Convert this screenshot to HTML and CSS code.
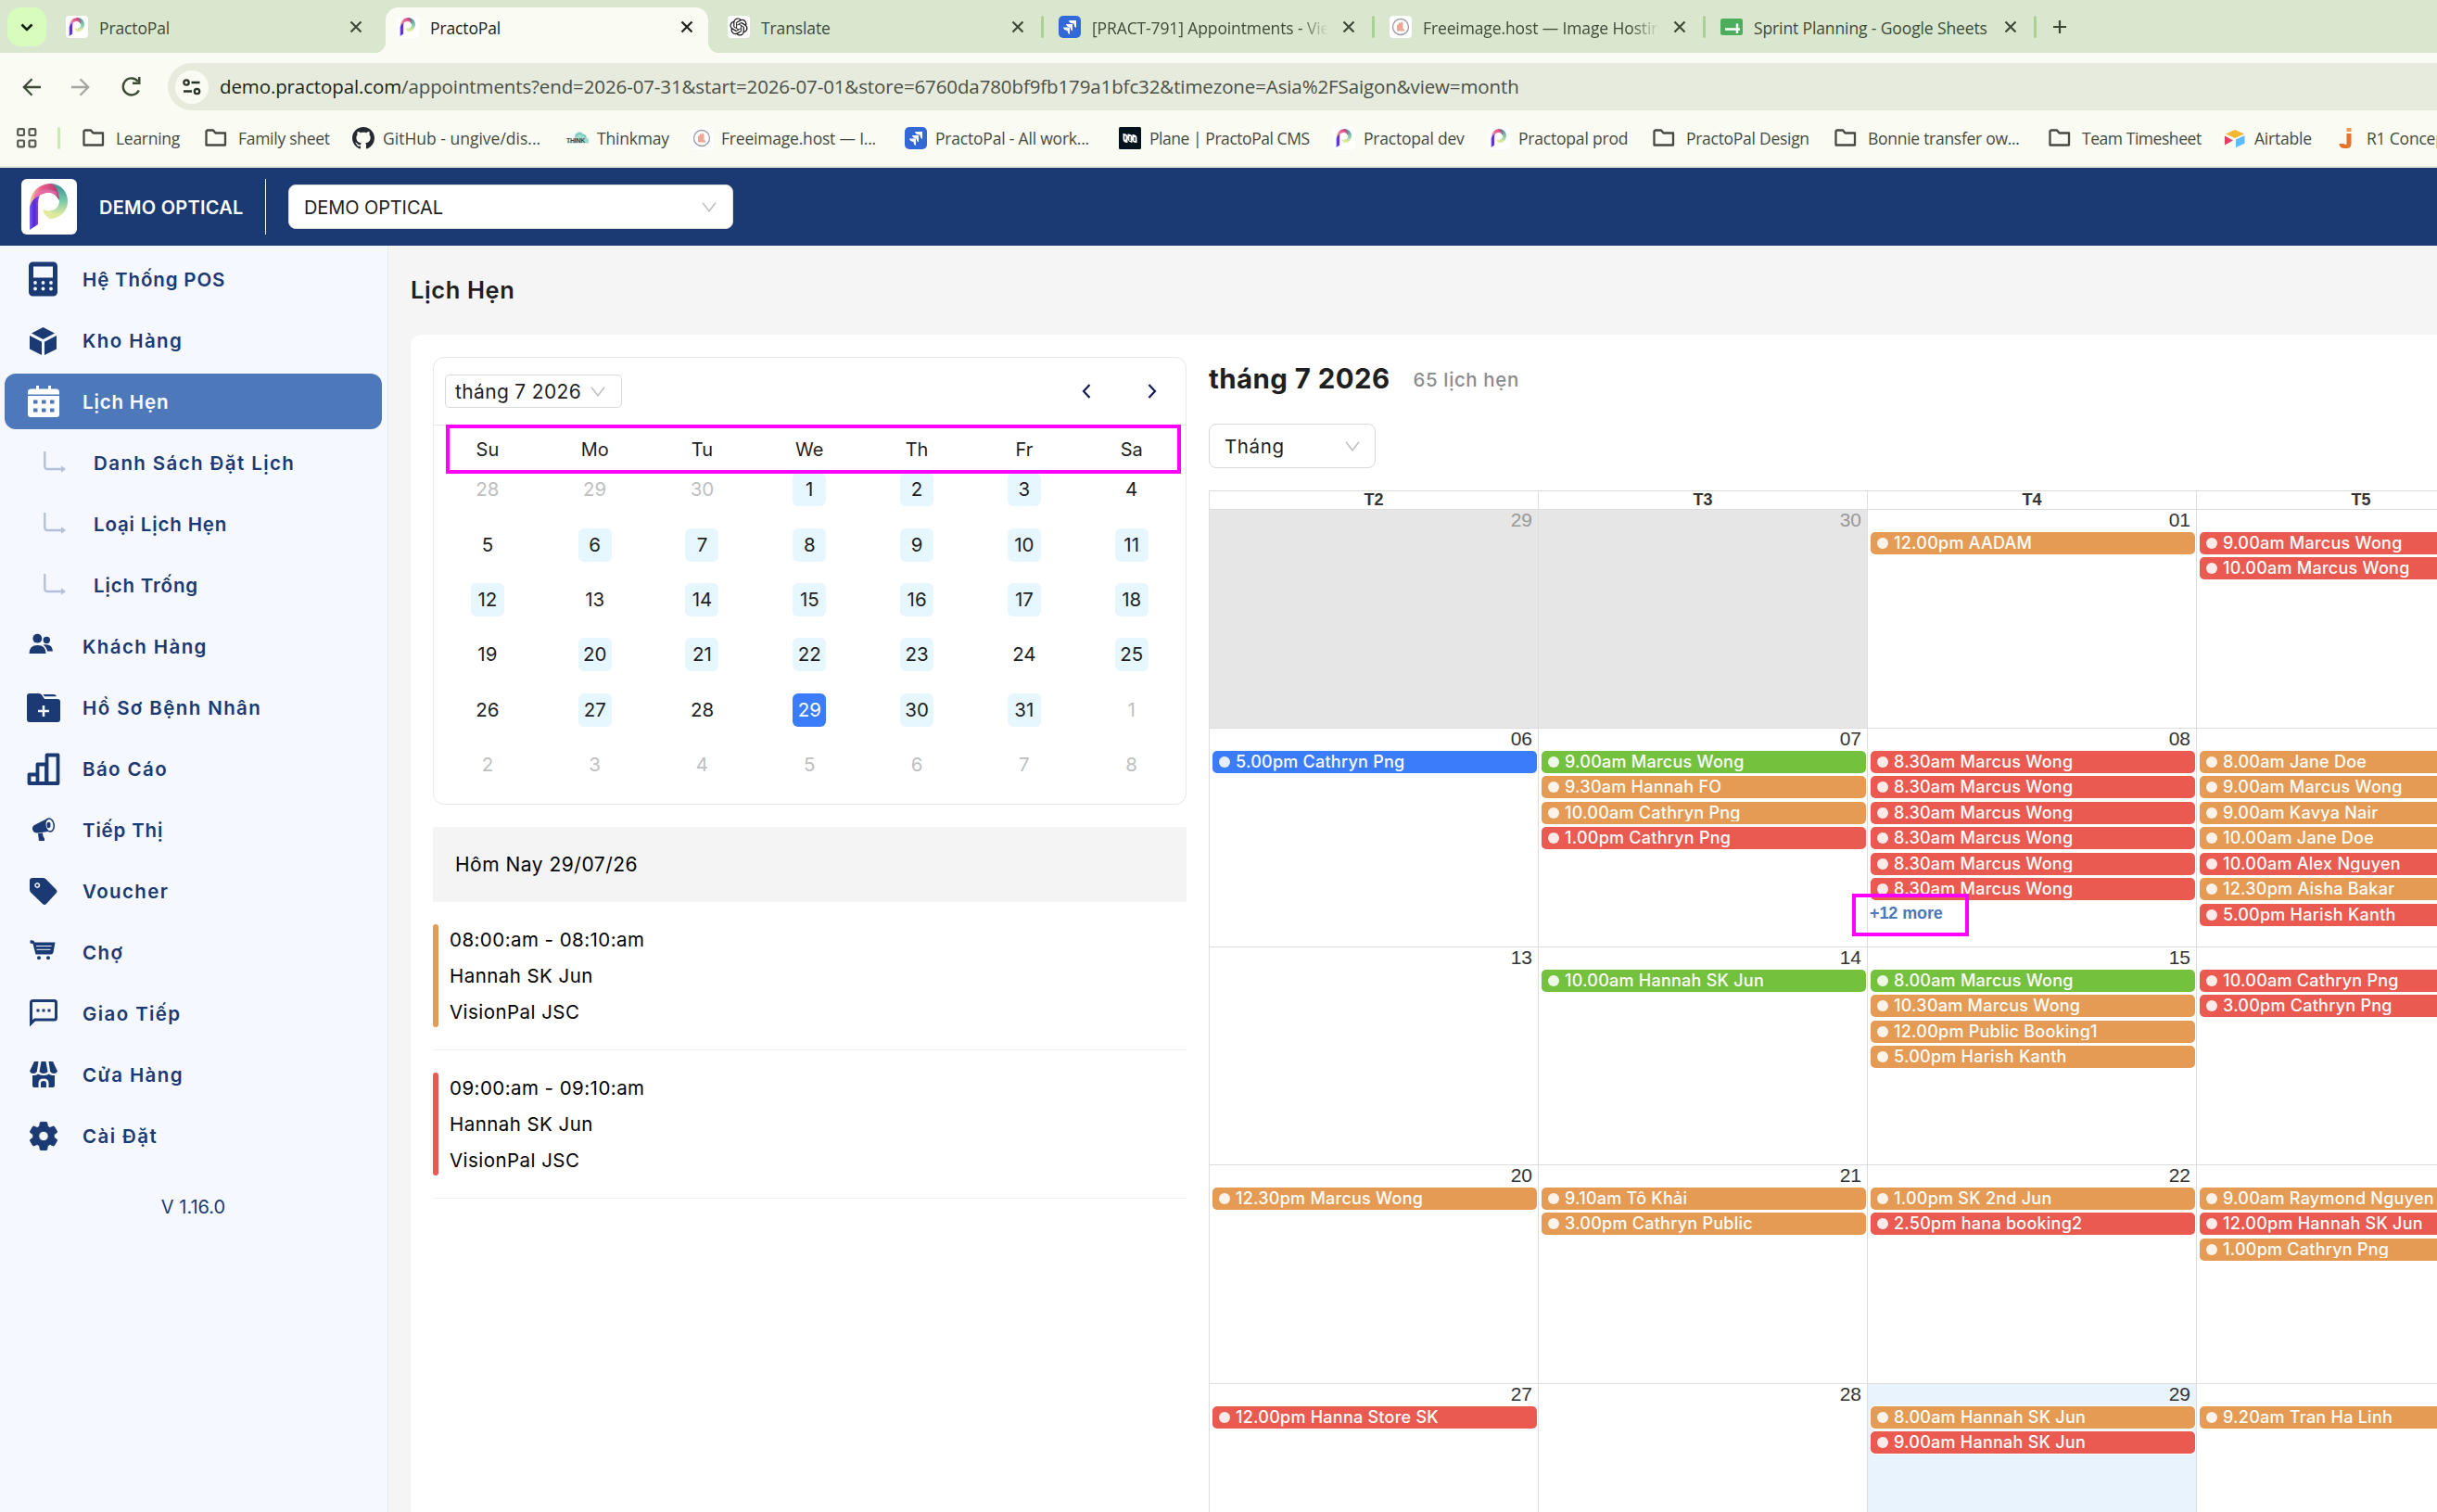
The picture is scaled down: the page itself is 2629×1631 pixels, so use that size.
FILE: index.html
```html
<!DOCTYPE html>
<html lang="vi">
<head>
<meta charset="utf-8">
<title>PractoPal</title>
<link rel="stylesheet" href="styles.css">
</head>
<body>
<svg class="defs" width="0" height="0">
  <defs>
    <linearGradient id="g-teal" x1="0" y1="0" x2="0" y2="1"><stop offset="0" stop-color="#3f9f98"/><stop offset=".5" stop-color="#7cc8ab"/><stop offset="1" stop-color="#dfe9a0"/></linearGradient>
    <linearGradient id="g-pink" x1="0" y1="0" x2="1" y2="0"><stop offset="0" stop-color="#f7c795"/><stop offset=".4" stop-color="#ea5c8c"/><stop offset="1" stop-color="#b03a70"/></linearGradient>
    <linearGradient id="g-stem" x1="0" y1="0" x2="1" y2="0"><stop offset="0" stop-color="#7a5cf8"/><stop offset=".45" stop-color="#5228d0"/><stop offset="1" stop-color="#a54df2"/></linearGradient>
  </defs>
  <symbol id="logo" viewBox="0 0 60 60">
    <path d="M32 9.5a14 14.500 0 1 1-1 29" fill="none" stroke="url(#g-teal)" stroke-width="9"/>
    <path d="M23 33l9.500 2v8.500q-7-2-9.500-10.500z" fill="#e3ea9e"/>
    <path d="M36 14.500a10.500 10.500 0 0 1 5 8" fill="none" stroke="#6cc3a8" stroke-width="2"/>
    <path d="M9 31Q9 8 30 5q9-1 11 18-6-10-14-8Q14 17 9 31z" fill="url(#g-pink)"/>
    <path d="M14 18Q24 7 38 14l1 5q-6-5-12-4-7 1-13 8z" fill="#e66fb0" opacity=".75"/>
    <path d="M9 55V30q2-8 11-12.500Q18 22 18 27v22z" fill="url(#g-stem)"/>
  </symbol>
  <symbol id="close" viewBox="0 0 14 14"><path d="M1.500 1.500l11 11M12.500 1.500l-11 11" stroke="currentColor" stroke-width="2.200" fill="none"/></symbol>
  <symbol id="folder" viewBox="0 0 24 24"><path d="M2.500 3.500h6.500l2.500 3h10.500v13H1.500V4.500z" fill="none" stroke="currentColor" stroke-width="2.300" stroke-linejoin="round"/></symbol>
  <symbol id="jira" viewBox="0 0 24 24"><rect width="24" height="24" rx="5" fill="#3269d6"/><path d="M11 5h8v8q-2.500-1-2.500-4.500Q11.500 8.500 11 5zM8 9h7v7.500q-2.500-1-2.500-4Q8.500 12 8 9zM5 12.500h7V20q-2.500-1-2.500-4Q5.500 15.500 5 12.500z" fill="#fff"/></symbol>
  <symbol id="freeimg" viewBox="0 0 24 24"><rect width="24" height="24" rx="4" fill="#fff"/><circle cx="12" cy="12" r="8.500" fill="none" stroke="#9b9ba2" stroke-width="1.300"/><path d="M8 16.500V10l2-1V7l2 1 1-2 1.500 2v6l1.500.5v2z" fill="#eda799"/></symbol>
  <symbol id="chev" viewBox="0 0 16 11"><path d="M1 .8l7 9 7-9" fill="none" stroke="#bfbfbf" stroke-width="1.500"/></symbol>
  <symbol id="sub" viewBox="0 0 40 40"><path d="M9.300 8v16q0 3 3 3H29" fill="none" stroke="#b4bfda" stroke-width="2.300"/><path d="M27 23.200l5 3.800-5 3.800z" fill="#b4bfda"/></symbol>
</svg>

<header class="chrome">
  <div class="tabs">
    <button class="tabs-menu"><svg width="14" height="9" viewBox="0 0 14 9"><path d="M1.500 1.500L7 7l5.500-5.500" fill="none" stroke="#10200a" stroke-width="2.600"/></svg></button>
    <div class="tab"><svg class="fav fav-white"><use href="#logo"/></svg><span class="tab-label">PractoPal</span><svg class="x"><use href="#close"/></svg></div>
    <div class="tab tab-active"><svg class="fav fav-white"><use href="#logo"/></svg><span class="tab-label">PractoPal</span><svg class="x"><use href="#close"/></svg></div>
    <div class="tab tab-sep"><svg class="fav fav-white" viewBox="-3 -3 30 30"><path fill="#222" d="M22.2819 9.8211a5.9847 5.9847 0 0 0-.5157-4.9108 6.0462 6.0462 0 0 0-6.5098-2.9A6.0651 6.0651 0 0 0 4.9807 4.1818a5.9847 5.9847 0 0 0-3.9977 2.9 6.0462 6.0462 0 0 0 .7427 7.0966 5.98 5.98 0 0 0 .511 4.9107 6.051 6.051 0 0 0 6.5146 2.9001A5.9847 5.9847 0 0 0 13.2599 24a6.0557 6.0557 0 0 0 5.7718-4.2058 5.9894 5.9894 0 0 0 3.9977-2.9001 6.0557 6.0557 0 0 0-.7475-7.0729zm-9.022 12.6081a4.4755 4.4755 0 0 1-2.8764-1.0408l.1419-.0804 4.7783-2.7582a.7948.7948 0 0 0 .3927-.6813v-6.7369l2.02 1.1686a.071.071 0 0 1 .038.052v5.5826a4.504 4.504 0 0 1-4.4945 4.4944zm-9.6607-4.1254a4.4708 4.4708 0 0 1-.5346-3.0137l.142.0852 4.783 2.7582a.7712.7712 0 0 0 .7806 0l5.8428-3.3685v2.3324a.0804.0804 0 0 1-.0332.0615L9.74 19.9502a4.4992 4.4992 0 0 1-6.1408-1.6464zM2.3408 7.8956a4.485 4.485 0 0 1 2.3655-1.9728V11.6a.7664.7664 0 0 0 .3879.6765l5.8144 3.3543-2.0201 1.1685a.0757.0757 0 0 1-.071 0l-4.8303-2.7865A4.504 4.504 0 0 1 2.3408 7.872zm16.5963 3.8558L13.1038 8.364 15.1192 7.2a.0757.0757 0 0 1 .071 0l4.8303 2.7913a4.4944 4.4944 0 0 1-.6765 8.1042v-5.6772a.79.79 0 0 0-.407-.667zm2.0107-3.0231l-.142-.0852-4.7735-2.7818a.7759.7759 0 0 0-.7854 0L9.409 9.2297V6.8974a.0662.0662 0 0 1 .0284-.0615l4.8303-2.7866a4.4992 4.4992 0 0 1 6.6802 4.66zM8.3065 12.863l-2.02-1.1638a.0804.0804 0 0 1-.038-.0567V6.0742a4.4992 4.4992 0 0 1 7.3757-3.4537l-.142.0805L8.704 5.459a.7948.7948 0 0 0-.3927.6813zm1.0976-2.3654l2.602-1.4998 2.6069 1.4998v2.9994l-2.5974 1.4997-2.6067-1.4997Z"/></svg><span class="tab-label">Translate</span><svg class="x"><use href="#close"/></svg></div>
    <div class="tab tab-sep"><svg class="fav"><use href="#jira"/></svg><span class="tab-label fade">[PRACT-791] Appointments - View</span><svg class="x"><use href="#close"/></svg></div>
    <div class="tab tab-sep"><svg class="fav"><use href="#freeimg"/></svg><span class="tab-label fade">Freeimage.host — Image Hosting</span><svg class="x"><use href="#close"/></svg></div>
    <div class="tab tab-sep"><svg class="fav" viewBox="0 0 24 24"><rect y="3" width="24" height="18" rx="2.500" fill="#4cae5c"/><path d="M5 14.500h16M18 8.500V19" stroke="#fff" stroke-width="2.400"/></svg><span class="tab-label">Sprint Planning - Google Sheets</span><svg class="x"><use href="#close"/></svg></div>
    <svg class="plus" viewBox="0 0 14 14"><path d="M7 0v14M0 7h14" stroke="#3b4634" stroke-width="2.200"/></svg>
  </div>

  <div class="toolbar">
    <svg width="20" height="20" viewBox="0 0 20 20"><path d="M20 10H2M10.500 1.200L1.800 10l8.700 8.800" fill="none" stroke="#3c4a36" stroke-width="2.300"/></svg>
    <svg width="20" height="20" viewBox="0 0 20 20"><path d="M0 10h18M9.500 1.200L18.200 10l-8.700 8.800" fill="none" stroke="#a3a79f" stroke-width="2.300"/></svg>
    <svg width="21" height="21" viewBox="0 0 21 21"><path d="M18.800 14.500A9 9 0 1 1 17.800 4.800" fill="none" stroke="#3c4a36" stroke-width="2.400"/><path d="M20.500 0v8h-8.500V5.500h6V0z" fill="#3c4a36"/></svg>
    <div class="omnibox">
      <span class="site"><svg width="20" height="18" viewBox="0 0 20 18"><g fill="none" stroke="#2b3326" stroke-width="2.300"><circle cx="4" cy="4" r="2.700"/><circle cx="15.500" cy="13.500" r="2.700"/><path d="M9.500 4h9M1 13.500h9"/></g></svg></span>
      <span class="url"><b>demo.practopal.com</b>/appointments?end=2026-07-31&amp;start=2026-07-01&amp;store=6760da780bf9fb179a1bfc32&amp;timezone=Asia%2FSaigon&amp;view=month</span>
    </div>
  </div>

  <div class="bookmarks">
    <svg class="apps" width="22" height="22" viewBox="0 0 22 22"><g fill="none" stroke="#555b50" stroke-width="2.200"><rect x="1.200" y="1.200" width="6.800" height="6.800" rx="1"/><rect x="13.500" y="1.200" width="6.800" height="6.800" rx="1"/><rect x="1.200" y="13.500" width="6.800" height="6.800" rx="1"/><rect x="13.500" y="13.500" width="6.800" height="6.800" rx="1"/></g></svg>
    <i class="bm-sep"></i>
    <a class="bm bm-f"><svg class="fav"><use href="#folder"/></svg>Learning</a>
    <a class="bm bm-f"><svg class="fav"><use href="#folder"/></svg>Family sheet</a>
    <a class="bm bm-wide"><svg class="fav" viewBox="0 0 16 16"><path fill="#24292f" d="M8 0C3.580 0 0 3.580 0 8c0 3.540 2.290 6.530 5.470 7.590.4.070.55-.17.55-.38 0-.19-.01-.82-.01-1.490-2.010.37-2.530-.49-2.690-.94-.09-.23-.48-.94-.82-1.130-.28-.15-.68-.52-.01-.53.63-.01 1.080.58 1.230.82.72 1.210 1.870.87 2.330.66.07-.52.28-.87.51-1.070-1.780-.2-3.640-.89-3.640-3.950 0-.87.31-1.590.82-2.150-.08-.2-.36-1.020.08-2.120 0 0 .67-.21 2.200.82.64-.18 1.320-.27 2-.27s1.360.09 2 .27c1.530-1.040 2.200-.82 2.200-.82.44 1.100.16 1.920.08 2.120.51.56.82 1.270.82 2.150 0 3.070-1.870 3.750-3.650 3.950.29.25.54.73.54 1.480 0 1.070-.01 1.930-.01 2.200 0 .21.15.46.55.38A8.010 8.010 0 0 0 16 8c0-4.420-3.580-8-8-8z"/></svg>GitHub - ungive/dis...</a>
    <a class="bm"><svg class="fav" viewBox="0 0 24 24"><path d="M9 11a5 5 0 0 1 9-3.500q4 .5 4 5h2v5H1v-2h8z" fill="#9fdcd0"/><path d="M10.500 10.500a4 4 0 0 1 7-2q3.500.5 3.500 3" fill="none" stroke="#5cb8a8" stroke-width="1"/><text x="0" y="16.500" class="think">THINK</text></svg>Thinkmay</a>
    <a class="bm"><svg class="fav"><use href="#freeimg"/></svg>Freeimage.host — I...</a>
    <a class="bm"><svg class="fav"><use href="#jira"/></svg>PractoPal - All work...</a>
    <a class="bm bm-tight"><svg class="fav" viewBox="0 0 24 24"><rect width="24" height="24" rx="1.500" fill="#04121c"/><path d="M4.500 7q4 0 5 3v7q-5 0-5-4.500zM9.500 7.500q5 0 5 3.500v6q-5-1-5-5zM14.500 8q5 0 5 4v5q-5 0-5-3.500z" fill="#fff"/><path d="M7 9.500v4M12 10v5M17 11v4" stroke="#04121c" stroke-width="1.200"/></svg>Plane | PractoPal CMS</a>
    <a class="bm"><svg class="fav fav-white"><use href="#logo"/></svg>Practopal dev</a>
    <a class="bm"><svg class="fav fav-white"><use href="#logo"/></svg>Practopal prod</a>
    <a class="bm bm-f"><svg class="fav"><use href="#folder"/></svg>PractoPal Design</a>
    <a class="bm bm-f"><svg class="fav"><use href="#folder"/></svg>Bonnie transfer ow...</a>
    <a class="bm bm-f bm-tight"><svg class="fav"><use href="#folder"/></svg>Team Timesheet</a>
    <a class="bm"><svg class="fav" viewBox="0 0 24 24"><path d="M12 3l10 4.500-10 4.500L2 7.500z" fill="#f4b731"/><path d="M13 13.500l9.500-4.300v8.500L13 22z" fill="#5bbcf8"/><path d="M1 9.500l9 5-9 5z" fill="#e23f64"/></svg>Airtable</a>
    <a class="bm bm-j"><svg class="fav" viewBox="0 0 24 24"><path d="M8.500 1h5v4h-5z" fill="#f09a55"/><path d="M8.500 7h5v11q0 5-5 5h-2q-6 0-6-5h5q0 1 3 1z" fill="#e5742a"/></svg>R1 Concepts</a>
  </div>
</header>

<div class="topbar">
  <svg class="brand-logo"><use href="#logo"/></svg>
  <strong class="brand">DEMO OPTICAL</strong>
  <i class="brand-sep"></i>
  <div class="select store"><span>DEMO OPTICAL</span><svg class="chev"><use href="#chev"/></svg></div>
</div>

<div class="app">
  <nav class="side">
    <a class="nav"><svg class="ic" viewBox="0 0 40 40"><path fill-rule="evenodd" d="M8.500 1.500h22a4.500 4.500 0 0 1 4.500 4.500v28a4.500 4.500 0 0 1-4.500 4.500h-22A4.500 4.500 0 0 1 4 34V6a4.500 4.500 0 0 1 4.500-4.500zM9 6.500v12h21v-12z"/><g fill="#f5f8ff"><circle cx="11" cy="24" r="1.900"/><circle cx="19.500" cy="24" r="1.900"/><circle cx="28" cy="24" r="1.900"/><circle cx="11" cy="30.500" r="1.900"/><circle cx="19.500" cy="30.500" r="1.900"/><circle cx="28" cy="30.500" r="1.900"/></g></svg><span class="pos">Hệ Thống POS</span></a>
    <a class="nav"><svg class="ic" viewBox="0 0 40 40"><path d="M19.500 6l12.500 6.500-12.500 6.500L7 12.500zM5 15l13 6.700V36L5 29.500zM34 15l-13 6.700V36l13-6.500z"/></svg><span>Kho Hàng</span></a>
    <a class="nav nav-on"><svg class="ic" viewBox="0 0 40 40"><path d="M12 3h3v3.500h10V3h3v3.500h5.500Q37 6.500 37 10v2.500H3V10q0-3.500 3.500-3.500H12z"/><path fill-rule="evenodd" d="M3 14h34v20q0 3-3 3H6q-3 0-3-3zM9 18.500v4h4.500v-4zM18 18.500v4h4.500v-4zM27 18.500v4h4.500v-4zM9 27.500v4h4.500v-4zM18 27.500v4h4.500v-4zM27 27.500v4h4.500v-4z"/></svg><span class="pos">Lịch Hẹn</span></a>
    <a class="nav nav-sub"><svg class="ic"><use href="#sub"/></svg><span>Danh Sách Đặt Lịch</span></a>
    <a class="nav nav-sub"><svg class="ic"><use href="#sub"/></svg><span class="pos">Loại Lịch Hẹn</span></a>
    <a class="nav nav-sub"><svg class="ic"><use href="#sub"/></svg><span class="pos">Lịch Trống</span></a>
    <a class="nav"><svg class="ic" viewBox="0 0 40 40"><circle cx="13.300" cy="11.700" r="4.900"/><circle cx="23.300" cy="13.500" r="3.700"/><path d="M4.500 28q0-9 9-9t9 9zM19.500 18.500q10-1.500 10.500 7H24q-.5-4-4.500-7z"/></svg><span>Khách Hàng</span></a>
    <a class="nav"><svg class="ic" viewBox="0 0 40 40"><path fill-rule="evenodd" d="M5 5h10q2 0 3 1.500l3 4.500h14q3 0 3 3v19q0 3-3 3H5q-3 0-3-3V8q0-3 3-3zM18.700 18v4.700H14v2.600h4.700V30h2.600v-4.700H26v-2.600h-4.700V18z"/><path d="M19.500 6h11q3 0 3.500 2.300H21z"/></svg><span>Hồ Sơ Bệnh Nhân</span></a>
    <a class="nav"><svg class="ic" viewBox="0 0 40 40"><path d="M4.500 26.500h9V36h-9zM13.500 15.500h9.500V36h-9.500zM23.500 5.500h12V36h-12z" fill="none" stroke="currentColor" stroke-width="3.800" stroke-linejoin="round"/></svg><span>Báo Cáo</span></a>
    <a class="nav"><svg class="ic" viewBox="0 0 40 40"><ellipse cx="26.500" cy="15" rx="4.700" ry="7" transform="rotate(-10 26.500 15)" fill="none" stroke="currentColor" stroke-width="1.600"/><path d="M23 8.500Q20 15 25 22l-11 1.500q-5 .5-6-4-.5-3.500 3-5z"/><ellipse cx="25.500" cy="15" rx="2" ry="3.200"/><path d="M14 24l5-.5q0 4 2 6v2.500h-6z"/></svg><span class="pos">Tiếp Thị</span></a>
    <a class="nav"><svg class="ic" viewBox="0 0 40 40"><path fill-rule="evenodd" d="M8 6h11q2 0 3.500 1.300L33.500 18.500q2 2 0 4L23 34q-2 1.800-4 0L6.500 22Q5 20.500 5 18.500V9q0-3 3-3zm5.200 5a3 3 0 1 0 .1 0zm0 1.500a1.500 1.500 0 1 1-.1 0z"/></svg><span>Voucher</span></a>
    <a class="nav"><svg class="ic" viewBox="0 0 40 40"><path d="M5.500 7.500q4-1 5 2h22l-2 11q-.5 2-2.500 2H11.500L8.500 11l-3-.5z"/><path d="M12 13.500h16.500M12.500 17.300h15" stroke="#f5f8ff" stroke-width="1"/><circle cx="15" cy="26.300" r="2"/><circle cx="25" cy="26.300" r="2"/></svg><span>Chợ</span></a>
    <a class="nav"><svg class="ic" viewBox="0 0 40 40"><path d="M6.500 31V8.500q0-2 2-2h23q2 0 2 2v16.500q0 2-2 2h-21z" fill="none" stroke="currentColor" stroke-width="3"/><path d="M5 26v8l6-6z"/><path d="M12.500 15.500h3v3h-3zM18.500 15.500h3v3h-3zM24.500 15.500h3v3h-3z"/></svg><span>Giao Tiếp</span></a>
    <a class="nav"><svg class="ic" viewBox="0 0 40 40"><path d="M10 6h4.500L12.800 17q-1.300 2-3.800 2-3 0-4-2.500zM17.500 6h5L24.500 17q-1.500 2-4.500 2t-4.500-2zM25.500 6H30l5 10.500q-1 2.500-4 2.500-2.500 0-3.800-2z"/><path fill-rule="evenodd" d="M8 21q4.500 0 6-1.500 6 3 12 0Q27.500 21 32 21v11q0 2-2 2H10q-2 0-2-2zM14.500 34v-4.500q0-5 5.500-5t5.500 5V34zM17 34v-4.500q0-2.500 3-2.500t3 2.500V34z"/></svg><span>Cửa Hàng</span></a>
    <a class="nav"><svg class="ic" viewBox="-.75 -1.060 25.500 25.500"><path d="M19.140 12.940c.04-.3.06-.61.06-.94 0-.32-.02-.64-.07-.94l2.030-1.580c.18-.14.23-.41.12-.61l-1.920-3.320c-.12-.22-.37-.29-.59-.22l-2.390.96c-.5-.38-1.030-.7-1.620-.94l-.36-2.540c-.04-.24-.24-.41-.48-.41h-3.840c-.24 0-.43.17-.47.41l-.36 2.540c-.59.24-1.130.57-1.620.94l-2.390-.96c-.22-.08-.47 0-.59.22L2.740 8.870c-.12.21-.08.47.12.61l2.030 1.580c-.05.3-.09.63-.09.94s.02.64.07.94l-2.030 1.580c-.18.14-.23.41-.12.61l1.920 3.320c.12.22.37.29.59.22l2.390-.96c.5.38 1.030.7 1.620.94l.36 2.540c.05.24.24.41.48.41h3.840c.24 0 .44-.17.47-.41l.36-2.540c.59-.24 1.130-.56 1.620-.94l2.390.96c.22.08.47 0 .59-.22l1.920-3.320c.12-.22.07-.47-.12-.61l-2.010-1.580zM12 15.300a3.300 3.300 0 1 1 0-6.600 3.300 3.300 0 0 1 0 6.600z" stroke="currentColor" stroke-width=".6" stroke-linejoin="round"/></svg><span>Cài Đặt</span></a>
    <div class="version">V 1.16.0</div>
  </nav>

  <main class="main">
    <h1>Lịch Hẹn</h1>
    <section class="card">
      <div class="left">
        <div class="mini">
          <div class="mini-head">
            <div class="select month"><span>tháng 7 2026</span><svg class="chev"><use href="#chev"/></svg></div>
            <svg class="arrow" viewBox="0 0 10 16"><path d="M8.500 1L2 8l6.500 7" fill="none" stroke="#141a55" stroke-width="2.200"/></svg>
            <svg class="arrow" viewBox="0 0 10 16"><path d="M1.500 1L8 8l-6.500 7" fill="none" stroke="#141a55" stroke-width="2.200"/></svg>
          </div>
          <div class="week"><span>Su</span><span>Mo</span><span>Tu</span><span>We</span><span>Th</span><span>Fr</span><span>Sa</span></div>
          <div class="days">
            <i>28</i><i>29</i><i>30</i><b>1</b><b>2</b><b>3</b><span>4</span>
            <span>5</span><b>6</b><b>7</b><b>8</b><b>9</b><b>10</b><b>11</b>
            <b>12</b><span>13</span><b>14</b><b>15</b><b>16</b><b>17</b><b>18</b>
            <span>19</span><b>20</b><b>21</b><b>22</b><b>23</b><span>24</span><b>25</b>
            <span>26</span><b>27</b><span>28</span><b class="today">29</b><b>30</b><b>31</b><i>1</i>
            <i>2</i><i>3</i><i>4</i><i>5</i><i>6</i><i>7</i><i>8</i>
          </div>
          <div class="mark mark-week"></div>
        </div>
        <div class="today-bar">Hôm Nay 29/07/26</div>
        <div class="appt"><div class="appt-in"><p>08:00:am - 08:10:am</p><p>Hannah SK Jun</p><p>VisionPal JSC</p></div></div>
        <div class="appt"><div class="appt-in appt-red"><p>09:00:am - 09:10:am</p><p>Hannah SK Jun</p><p>VisionPal JSC</p></div></div>
      </div>

      <div class="right">
        <div class="head"><h2>tháng 7 2026</h2><span>65 lịch hẹn</span></div>
        <div class="select view"><span>Tháng</span><svg class="chev"><use href="#chev"/></svg></div>
        <div class="cal">
          <div class="th">T2</div><div class="th">T3</div><div class="th">T4</div><div class="th">T5</div>

          <div class="cell off"><em>29</em></div>
          <div class="cell off"><em>30</em></div>
          <div class="cell"><em>01</em><div class="ev or"><span>12.00pm AADAM</span></div></div>
          <div class="cell"><em></em><div class="ev re"><span>9.00am Marcus Wong</span></div><div class="ev re"><span>10.00am Marcus Wong</span></div></div>

          <div class="cell"><em>06</em><div class="ev bl"><span>5.00pm Cathryn Png</span></div></div>
          <div class="cell"><em>07</em><div class="ev gr"><span>9.00am Marcus Wong</span></div><div class="ev or"><span>9.30am Hannah FO</span></div><div class="ev or"><span>10.00am Cathryn Png</span></div><div class="ev re"><span>1.00pm Cathryn Png</span></div></div>
          <div class="cell"><em>08</em><div class="ev re"><span>8.30am Marcus Wong</span></div><div class="ev re"><span>8.30am Marcus Wong</span></div><div class="ev re"><span>8.30am Marcus Wong</span></div><div class="ev re"><span>8.30am Marcus Wong</span></div><div class="ev re"><span>8.30am Marcus Wong</span></div><div class="ev re"><span>8.30am Marcus Wong</span></div><a class="more">+12 more</a><div class="mark mark-more"></div></div>
          <div class="cell"><em></em><div class="ev or"><span>8.00am Jane Doe</span></div><div class="ev or"><span>9.00am Marcus Wong</span></div><div class="ev or"><span>9.00am Kavya Nair</span></div><div class="ev or"><span>10.00am Jane Doe</span></div><div class="ev re"><span>10.00am Alex Nguyen</span></div><div class="ev or"><span>12.30pm Aisha Bakar</span></div><div class="ev re"><span>5.00pm Harish Kanth</span></div></div>

          <div class="cell"><em>13</em></div>
          <div class="cell"><em>14</em><div class="ev gr"><span>10.00am Hannah SK Jun</span></div></div>
          <div class="cell"><em>15</em><div class="ev gr"><span>8.00am Marcus Wong</span></div><div class="ev or"><span>10.30am Marcus Wong</span></div><div class="ev or"><span>12.00pm Public Booking1</span></div><div class="ev or"><span>5.00pm Harish Kanth</span></div></div>
          <div class="cell"><em></em><div class="ev re"><span>10.00am Cathryn Png</span></div><div class="ev re"><span>3.00pm Cathryn Png</span></div></div>

          <div class="cell"><em>20</em><div class="ev or"><span>12.30pm Marcus Wong</span></div></div>
          <div class="cell"><em>21</em><div class="ev or"><span>9.10am Tô Khải</span></div><div class="ev or"><span>3.00pm Cathryn Public</span></div></div>
          <div class="cell"><em>22</em><div class="ev or"><span>1.00pm SK 2nd Jun</span></div><div class="ev re"><span>2.50pm hana booking2</span></div></div>
          <div class="cell"><em></em><div class="ev or"><span>9.00am Raymond Nguyen</span></div><div class="ev re"><span>12.00pm Hannah SK Jun</span></div><div class="ev or"><span>1.00pm Cathryn Png</span></div></div>

          <div class="cell"><em>27</em><div class="ev re"><span>12.00pm Hanna Store SK</span></div></div>
          <div class="cell"><em>28</em></div>
          <div class="cell now"><em>29</em><div class="ev or"><span>8.00am Hannah SK Jun</span></div><div class="ev re"><span>9.00am Hannah SK Jun</span></div></div>
          <div class="cell"><em></em><div class="ev or"><span>9.20am Tran Ha Linh</span></div></div>
        </div>
      </div>
    </section>
  </main>
</div>
</body>
</html>
```
FILE: styles.css
```css
* { box-sizing: border-box; margin: 0; padding: 0; }
body {
  width: 2629px; height: 1631px; overflow: hidden;
  display: flex; flex-direction: column;
  font-family: Inter, "Noto Sans", sans-serif; color: #1f1f1f; background: #f5f5f5;
}
svg { flex: none; display: block; }
.defs { position: absolute; }
i, em { font-style: normal; }

/* browser chrome */
.chrome { height: 181px; flex: none; background: #fafbf2; border-bottom: 2px solid #e3e8da; font-family: "Open Sans", "Noto Sans", sans-serif; color: #454a41; }
.tabs { height: 57px; background: #dae7cf; display: flex; padding-left: 8px; }
.tabs-menu { width: 42px; height: 42px; margin: 8px 9px 0 0; border: 0; border-radius: 14px; background: #d7fdbe; display: grid; place-items: center; }
.tab { width: 357px; height: 49px; margin-top: 8px; padding: 9px 0 0 12px; display: flex; color: #3f4a38; position: relative; }
.fav { width: 24px; height: 24px; }
.fav-white { background: #fff; border-radius: 4px; }
.tab-label { width: 255px; margin-left: 12px; font-size: 17.5px; letter-spacing: -.12px; line-height: 27px; white-space: nowrap; overflow: hidden; }
.fade { -webkit-mask-image: linear-gradient(90deg, #000 88%, transparent); mask-image: linear-gradient(90deg, #000 88%, transparent); }
.x { width: 14px; height: 14px; margin: 5px 0 0 15px; }
.tab-sep::after { content: ""; width: 3px; height: 24px; border-radius: 2px; background: #a9d194; margin-left: 18px; }
.tab-active { width: 348px; margin-right: 9px; background: #fafbf2; border-radius: 14px 14px 0 0; color: #1d2119; }
.tab-active::before, .tab-active::after { content: ""; position: absolute; bottom: 0; width: 12px; height: 12px; }
.tab-active::before { left: -12px; background: radial-gradient(circle at 0 0, transparent 12px, #fafbf2 12.500px); }
.tab-active::after { right: -12px; background: radial-gradient(circle at 100% 0, transparent 12px, #fafbf2 12.500px); }
.plus { width: 14px; height: 14px; margin: 22px 0 0 14px; }

.toolbar { height: 73px; padding-left: 24px; display: flex; align-items: center; gap: 33px; }
.toolbar > svg:nth-child(3) { margin-left: 1px; }
.omnibox { flex: 1; height: 51px; margin-left: -4px; margin-right: -30px; border-radius: 26px; background: #e6ebdd; display: flex; align-items: center; padding-left: 8px; }
.site { width: 36px; height: 36px; border-radius: 50%; background: #fafbf2; display: grid; place-items: center; margin-right: 12px; }
.url { font-size: 20.500px; letter-spacing: -.115px; line-height: 28px; padding-bottom: 2px; white-space: nowrap; color: #4b5046; }
.url b { font-weight: 400; color: #1b1f17; }

.bookmarks { height: 38px; display: grid; align-items: center; width: 2700px; padding-left: 18px;
  grid-template-columns: 44px 27px 132px 159px 231px 134px 231px 231px 231px 167px 178px 196px 231px 189px 124px 200px; }
.bm-sep { width: 3px; height: 24px; border-radius: 2px; background: #c6efae; }
.bm { display: flex; align-items: center; gap: 9px; font-size: 17.500px; letter-spacing: -.2px; line-height: 28px; white-space: nowrap; }
.bm-f { gap: 12px; letter-spacing: -.28px; }
.bm-j { gap: 6px; }
.bm-wide { letter-spacing: 0; }
.bm-tight { letter-spacing: -.45px; }
.think { font: 700 7px "Liberation Sans", sans-serif; letter-spacing: -.3px; fill: #444; }

/* application header */
.topbar { height: 84px; flex: none; background: #1b3972; display: flex; align-items: center; padding-left: 23px; }
.brand-logo { width: 60px; height: 60px; background: #fff; border-radius: 6px; }
.brand { margin-left: 24px; width: 179px; padding-top: 1px; color: #fff; font-size: 20px; font-weight: 600; letter-spacing: .25px; white-space: nowrap; }
.brand-sep { width: 1px; height: 60px; background: #fff; }
.select { display: flex; align-items: center; justify-content: space-between; background: #fff; border: 1px solid #d9d9d9; border-radius: 8px; font-size: 20px; white-space: nowrap; }
.select span { padding-top: 1px; }
.chev { width: 16px; height: 11px; }
.store { width: 480px; height: 48px; margin-left: 24px; padding: 0 17px 0 16px; letter-spacing: -.1px; }

/* sidebar */
.app { flex: 1; display: flex; min-height: 0; }
.side { width: 419px; flex: none; background: #f5f8ff; border-right: 1px solid #e6e9f0; padding: 6px 6px 0 5px; display: flex; flex-direction: column; gap: 6px; }
.nav { height: 60px; flex: none; padding-left: 22px; display: flex; align-items: center; gap: 22px; border-radius: 12px; color: #1b3972; font-size: 20.500px; font-weight: 600; letter-spacing: 1.400px; white-space: nowrap; }
.nav span { padding-top: 1px; }
.nav .pos { letter-spacing: .850px; }
.nav-sub { padding-left: 34px; }
.nav-on { background: #4d79bb; color: #fff; }
.ic { width: 40px; height: 40px; fill: currentColor; }
.version { text-align: center; color: #1b3972; font-size: 20px; line-height: 28px; margin-top: 27px; }

/* page */
.main { flex: 1; min-width: 0; padding-left: 24px; overflow: hidden; }
h1 { height: 96px; line-height: 96px; font-size: 25.500px; font-weight: 600; letter-spacing: .6px; }
.card { height: 1300px; width: 2300px; background: #fff; border-radius: 12px 0 0 0; padding: 24px; display: flex; gap: 24px; }
.left { width: 813px; flex: none; }
.mini { height: 483px; border: 1px solid #e8e8e8; border-radius: 12px; position: relative; }
.mini-head { height: 73px; border-bottom: 1px solid #e8e8e8; padding: 0 31px 0 12px; display: flex; align-items: center; }
.month { width: 191px; height: 36px; border-radius: 5px; padding: 0 17px 0 10px; margin-right: auto; font-size: 21px; letter-spacing: .35px; }
.arrow { width: 10px; height: 16px; }
.arrow + .arrow { margin-left: 61px; }
.week { display: grid; grid-template-columns: repeat(7, 115.800px); height: 39.500px; padding-top: 12.500px; line-height: 27px; font-size: 20px; text-align: center; }
.days { display: grid; grid-template-columns: repeat(7, 115.800px); grid-auto-rows: 59.350px; place-items: center; font-size: 20.500px; }
.days > * { width: 36px; height: 36px; line-height: 36px; text-align: center; font-weight: 400; border-radius: 6px; }
.days i { color: #bfbfbf; }
.days b { background: #e6f7ff; }
.days b.today { background: #3b7cfa; color: #fff; }
.mark { position: absolute; border: 4px solid #f0f; }
.mark-week { left: 13px; top: 72px; width: 793px; height: 53px; }

.today-bar { margin-top: 24px; height: 81px; background: #f4f4f4; padding-left: 24px; line-height: 82px; font-size: 21px; letter-spacing: .500px; color: #000; }
.appt { height: 160px; padding-top: 24px; border-bottom: 1px solid #f0f0f0; color: #000; font-size: 20.500px; letter-spacing: .45px; }
.appt-in { display: flex; flex-direction: column; justify-content: center; position: relative; height: 111px; padding-left: 18px; line-height: 39px; }
.appt-in::before { content: ""; position: absolute; left: 0; top: 0; width: 6px; height: 111px; border-radius: 3px; background: #e59b54; }
.appt-red::before { background: #eb5a50; }

.right { flex: none; }
.head { display: flex; align-items: baseline; gap: 25px; height: 72px; }
h2 { font-size: 29.500px; line-height: 46px; font-weight: 700; letter-spacing: .4px; }
.head span { font-size: 20.500px; font-weight: 500; color: #8c8c8c; letter-spacing: .6px; position: relative; top: -2px; }
.view { width: 180px; height: 48px; padding: 0 16px 0 16px; font-size: 20.500px; letter-spacing: .6px; }
.cal { margin-top: 24px; display: grid; grid-template-columns: repeat(4, 355px); grid-template-rows: 20px 236px 236px 235px 236px 236px; font-family: "Liberation Sans", sans-serif; border-right: 1px solid #ddd; }
.th { border: solid #ddd; border-width: 1px 0 0 1px; font-weight: 700; font-size: 18px; line-height: 18px; text-align: center; color: #333; }
.cell { border: solid #ddd; border-width: 1px 0 0 1px; padding: 0 1px 0 3px; position: relative; }
.cell em { display: block; height: 24px; line-height: 22px; padding-right: 5px; text-align: right; font-size: 21px; color: #333; }
.off { background: #e6e6e6; }
.off em { color: #999; }
.now { background: #e8f3fe; }
.now .ev { box-shadow: 0 0 0 1px #fff; }
.ev { height: 24px; margin-bottom: 3.450px; border-radius: 5px; padding-left: 7px; display: flex; align-items: center; gap: 6px; font-family: Inter, "Noto Sans", sans-serif; font-size: 18px; font-weight: 500; color: #fff; letter-spacing: .25px; white-space: nowrap; }
.ev::before { content: ""; width: 12px; height: 12px; border-radius: 50%; background: rgba(255, 255, 255, .88); flex: none; }
.ev span { align-self: flex-start; height: 21.500px; line-height: 24px; overflow: hidden; }
.or { background: #e59b54; }
.re { background: #eb5a50; }
.gr { background: #74c13e; }
.bl { background: #3b7cfa; }
.more { display: block; margin-left: -1px; padding-top: 1px; font-size: 18px; line-height: 18px; font-weight: 700; letter-spacing: -.1px; color: #4a7ab8; }
.mark-more { left: -17px; top: 178px; width: 126px; height: 46px; }
```
